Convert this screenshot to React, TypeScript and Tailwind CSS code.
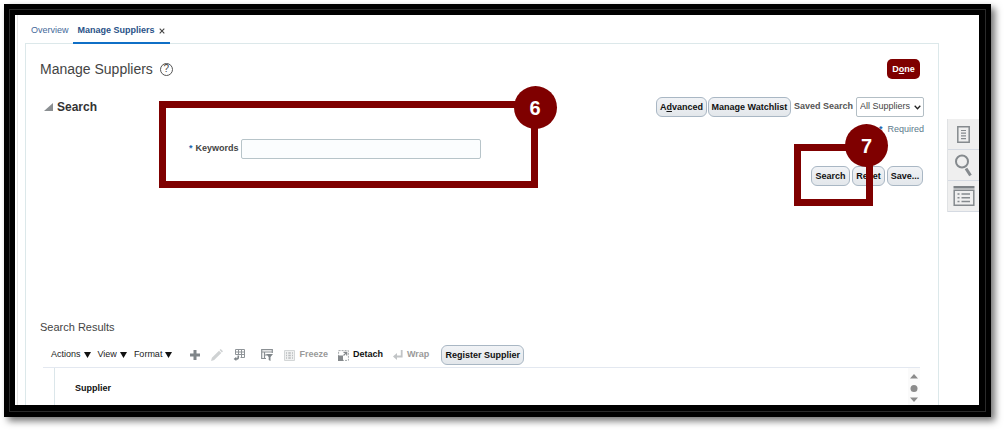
import type { ReactNode } from "react";

const menus = ["Actions", "View", "Format"];

const buttonLook =
    "h-5 shrink-0 rounded-md border border-[#a9b7c4] bg-linear-to-b from-[#f1f3f6] to-[#e3e7eb] text-[9px] font-bold leading-3 text-[#111] whitespace-nowrap";

// Numbered marker on the corner of a highlighted area
function Badge({ value, className }: { value: string; className: string }) {
    return (
        <span
            className={`absolute flex h-[43px] w-[43px] items-center justify-center rounded-full bg-[#7f0000] text-xl font-bold text-white ${className}`}
        >
            {value}
        </span>
    );
}

function IconButton({
    label,
    className,
    children,
}: {
    label: string;
    className: string;
    children: ReactNode;
}) {
    return (
        <button
            type="button"
            aria-label={label}
            className={`h-3 w-3 shrink-0 ${className}`}
        >
            <svg viewBox="0 0 12 12" className="h-3 w-3" aria-hidden="true">
                {children}
            </svg>
        </button>
    );
}

function Tabs() {
    return (
        <nav className="flex h-[29px] items-stretch pl-4 text-[9px]">
            <a
                href="#overview"
                className="flex items-center pt-[2px] text-[#44699a]"
            >
                Overview
            </a>
            <div className="relative z-10 ml-1 flex items-center gap-1 border-b-2 border-[#0f6fc6] px-[5px] pt-1">
                <a href="#suppliers" className="font-bold text-[#2a5288]">
                    Manage Suppliers
                </a>
                <button type="button" aria-label="Close tab">
                    <svg viewBox="0 0 6 6" className="h-[6px] w-[6px]">
                        <path
                            d="M.7 .7 5.3 5.3M5.3 .7 .7 5.3"
                            stroke="#444"
                            strokeWidth="1.1"
                        />
                    </svg>
                </button>
            </div>
        </nav>
    );
}

function SearchPanel() {
    return (
        <section>
            <div className="mt-[18px] flex h-5 items-center">
                <svg viewBox="0 0 9 8" className="ml-1 h-2 w-[9px]">
                    <path d="M9 0V8H0Z" fill="#8b8f92" />
                </svg>
                <h2 className="ml-1 text-xs font-bold text-[#333]">Search</h2>
                <button
                    type="button"
                    className={`${buttonLook} ml-auto w-[51px]`}
                >
                    A<u>d</u>vanced
                </button>
                <button
                    type="button"
                    className={`${buttonLook} ml-px w-[83px]`}
                >
                    Manage Watchlist
                </button>
                <label
                    htmlFor="saved"
                    className="ml-[3px] text-[9px] font-bold text-[#555]"
                >
                    Saved Search
                </label>
                <div className="relative ml-[3px] flex items-center">
                    <select
                        id="saved"
                        className="h-5 w-[68px] appearance-none rounded-xs border border-[#b3bec5] bg-white pl-[3px] text-[9px] text-[#444]"
                    >
                        <option>All Suppliers</option>
                    </select>
                    <svg
                        viewBox="0 0 7 5"
                        className="pointer-events-none absolute right-[3px] h-[5px] w-[7px]"
                    >
                        <path
                            d="M.7 .8 3.5 3.7 6.3 .8"
                            fill="none"
                            stroke="#222"
                            strokeWidth="1.3"
                        />
                    </svg>
                </div>
            </div>

            <p className="mt-[6px] flex justify-end gap-[5px] text-[9px] leading-3 text-[#5b7a8c]">
                <span className="font-bold text-[#1c66b0]">*</span> Required
            </p>

            <div className="relative ml-[149px] mt-1 flex h-5 w-fit items-center text-[9px]">
                <span className="font-bold text-[#1c66b0]">*</span>
                <label
                    htmlFor="keywords"
                    className="ml-[3px] w-[45px] font-bold text-[#444]"
                >
                    Keywords
                </label>
                <input
                    id="keywords"
                    type="text"
                    className="h-5 w-60 rounded-xs border border-[#b7c4c9] bg-[#fbfdfe] px-1"
                />
                <div className="pointer-events-none absolute -bottom-[29px] -left-[30px] -right-[57px] -top-[38px] border-[7px] border-[#7f0000]">
                    <Badge value="6" className="-right-[26px] -top-[22px]" />
                </div>
            </div>

            <div className="mt-[7px] flex justify-end">
                <div className="relative flex">
                    <button
                        type="button"
                        className={`${buttonLook} w-[39px]`}
                    >
                        Search
                    </button>
                    <div className="pointer-events-none absolute -bottom-5 -left-[17px] -right-[23px] -top-[22px] z-10 border-[7px] border-[#7f0000]">
                        <Badge
                            value="7"
                            className="-right-[22px] -top-[27px]"
                        />
                    </div>
                </div>
                <button
                    type="button"
                    className={`${buttonLook} ml-[2px] w-[33px]`}
                >
                    Reset
                </button>
                <button
                    type="button"
                    className={`${buttonLook} ml-[2px] mr-px w-9`}
                >
                    Save...
                </button>
            </div>
        </section>
    );
}

function Toolbar() {
    return (
        <div className="mt-[10px] flex h-5 items-center pl-[11px] text-[9px]">
            <div className="flex gap-[7px]">
                {menus.map((menu) => (
                    <button
                        key={menu}
                        type="button"
                        className="flex items-center gap-[3px] text-[#222]"
                    >
                        {menu}
                        <svg viewBox="0 0 7 6" className="h-[6px] w-[7px]">
                            <path d="M0 0H7L3.5 6Z" fill="#111" />
                        </svg>
                    </button>
                ))}
            </div>
            <IconButton label="Add" className="ml-[17px]">
                <path d="M6 1V11M1 6H11" stroke="#7f8589" strokeWidth="3" />
            </IconButton>
            <IconButton label="Edit" className="ml-[10px]">
                <path
                    d="M0 12 .9 8.800 8 1.700 10.300 4 3.200 11.100ZM8.600 1.100 9.700 0 12 2.300 10.900 3.400Z"
                    fill="#cfd2d3"
                />
            </IconButton>
            <IconButton label="Export to Excel" className="ml-[10px]">
                <path
                    d="M2.5 5.500V.5H11.5V8.5H7.500M2.5 3H11.5M5.5 .5V5.500M8.5 .5V8.5M2.500 5.500H11.5"
                    fill="none"
                    stroke="#8f9498"
                />
                <path
                    d="M5.300 6.5V8.200Q5.300 10 3 10"
                    fill="none"
                    stroke="#7f8589"
                    strokeWidth="1.6"
                />
                <path d="M3.300 7.800V12L.6 10Z" fill="#7f8589" />
            </IconButton>
            <IconButton label="Query by Example" className="ml-4">
                <path
                    d="M11.3 4V.7H.7V9.5H5M.7 3H11M3.5 3V9.5M3.5 6H6"
                    fill="none"
                    stroke="#8a8f93"
                    strokeWidth="1.2"
                />
                <path d="M5 5H12L9.5 8V12L7.7 11V8Z" fill="#7f8589" />
            </IconButton>
            <button
                type="button"
                disabled
                className="ml-[11px] flex items-center gap-1 font-bold text-[#9a9a9a]"
            >
                <svg viewBox="0 0 11 11" className="h-[11px] w-[11px]">
                    <path
                        d="M.5 .5H10.5V10.5H.5Z"
                        fill="#f0f1f1"
                        stroke="#d3d6d7"
                    />
                    <path
                        d="M2 3H3M2 5.5H3M2 8H3M4.3 3H6.8M4.3 5.5H6.8M4.3 8H6.8M8 3H9M8 5.5H9M8 8H9"
                        stroke="#b9bdbf"
                        strokeWidth="1.5"
                    />
                </svg>
                Freeze
            </button>
            <button
                type="button"
                className="ml-[10px] flex items-center gap-1 font-bold text-[#111]"
            >
                <svg viewBox="0 0 11 11" className="h-[11px] w-[11px]">
                    <path
                        d="M.6 .6H10.4V10.4H.6Z"
                        fill="none"
                        stroke="#a4a8ab"
                        strokeDasharray="2 1"
                    />
                    <path d="M0 5.500H5V11H0Z" fill="#85898c" />
                    <path
                        d="M5.500 5.500 8.2 2.800M5.5 2.3H8.7V5.5"
                        fill="none"
                        stroke="#85898c"
                        strokeWidth="1.2"
                    />
                </svg>
                Detach
            </button>
            <button
                type="button"
                disabled
                className="ml-[10px] flex items-center gap-1 font-bold text-[#9a9a9a]"
            >
                <svg viewBox="0 0 10 10" className="h-[10px] w-[10px]">
                    <path
                        d="M8.7 0V6.5H3"
                        fill="none"
                        stroke="#c1c4c6"
                        strokeWidth="1.8"
                    />
                    <path d="M0 6.5 4 3V10Z" fill="#c1c4c6" />
                </svg>
                Wrap
            </button>
            <button type="button" className={`${buttonLook} ml-3 w-[83px]`}>
                Register Supplier
            </button>
        </div>
    );
}

function Results() {
    return (
        <section className="mt-[133px] flex flex-1 flex-col">
            <h2 className="text-[11px] leading-4 text-[#444]">
                Search Results
            </h2>
            <Toolbar />
            <div className="ml-[3px] mr-[4px] mt-[2px] flex flex-1 border-t border-[#e3e8f0]">
                <div className="ml-[11px] flex-1 border-l border-[#dbe6ea]">
                    <table className="w-full text-left text-[9px]">
                        <thead>
                            <tr>
                                <th className="h-[37px] pl-5 pt-1 text-[#111]">
                                    Supplier
                                </th>
                            </tr>
                        </thead>
                    </table>
                </div>
                <svg
                    viewBox="0 0 12 37"
                    className="h-[37px] w-3 bg-[#fafafa]"
                    aria-hidden="true"
                >
                    <path d="M6 6 10 10.5H2ZM2 29.500H10L6 34Z" fill="#8a8a8a" />
                    <circle cx="6" cy="20.500" r="3.500" fill="#8a8a8a" />
                </svg>
            </div>
        </section>
    );
}

function Rail() {
    const item =
        "flex h-[31px] w-[31px] items-center justify-center border-b border-[#d5dae2] bg-[#efefef]";
    return (
        <aside className="ml-2 mt-[104px] h-fit border-l border-[#e0e2e4]">
            <button type="button" aria-label="Notes" className={item}>
                <svg viewBox="0 0 13 17" className="h-[17px] w-[13px]">
                    <path
                        d="M.8 .8H12.2V16.2H.8Z"
                        fill="none"
                        stroke="#858a8e"
                        strokeWidth="1.5"
                    />
                    <path
                        d="M4 4.500H9M4 7.200H9M4 9.900H9M4 12.600H9"
                        stroke="#858a8e"
                        strokeWidth="1.2"
                    />
                </svg>
            </button>
            <button type="button" aria-label="Find" className={item}>
                <svg viewBox="0 0 17 23" className="h-[23px] w-[17px]">
                    <circle
                        cx="7"
                        cy="7.500"
                        r="6"
                        fill="none"
                        stroke="#858a8e"
                        strokeWidth="2"
                    />
                    <path
                        d="M11 14.500 15.500 21.500"
                        stroke="#858a8e"
                        strokeWidth="3"
                    />
                </svg>
            </button>
            <button type="button" aria-label="List" className={item}>
                <svg viewBox="0 0 22 20" className="h-5 w-[22px]">
                    <path d="M.5 0H21.500V2.500H.5Z" fill="#7d8286" />
                    <path
                        d="M1.200 4.300H20.800V19.200H1.200Z"
                        fill="none"
                        stroke="#858a8e"
                        strokeWidth="1.5"
                    />
                    <path
                        d="M4.500 8H6.500M4.500 11.700H6.500M4.500 15.400H6.500M8.500 8H17M8.500 11.700H17M8.500 15.400H17"
                        stroke="#858a8e"
                        strokeWidth="1.5"
                    />
                </svg>
            </button>
        </aside>
    );
}

export default function App() {
    return (
        <div className="flex min-h-screen flex-col bg-white pb-[13px] pl-1 pr-[13px] pt-1 font-['Liberation_Sans',Arial,sans-serif]">
            <div className="flex flex-1 flex-col bg-black p-[5px] shadow-[4px_4px_7px_rgba(0,0,0,0.55)]">
                <div className="flex flex-1 flex-col border border-[#2a2a2a] pb-[6px] pl-[5px] pr-[6px] pt-[5px]">
                    <div className="flex flex-1 bg-white">
                        <div className="w-[3px] rounded-bl-md border-r border-[#e4e4e4]" />
                        <main className="-ml-[3px] flex flex-1 flex-col">
                            <Tabs />
                            <div className="-mt-px ml-[10px] flex flex-1 flex-col border border-b-0 border-[#dce8ea] pl-[14px] pr-[14px] pt-[15px]">
                                <header className="flex h-5 items-center">
                                    <h1 className="text-sm text-[#444]">
                                        Manage Suppliers
                                    </h1>
                                    <button
                                        type="button"
                                        aria-label="Help"
                                        className="ml-[7px] flex h-[13px] w-[13px] items-center justify-center rounded-full border border-[#555] text-[10px] leading-3 text-[#444]"
                                    >
                                        ?
                                    </button>
                                    <button
                                        type="button"
                                        className="ml-auto mr-1 h-5 w-[33px] rounded-[5px] bg-[#7f0000] text-[9px] font-bold leading-3 text-white"
                                    >
                                        D<u>o</u>ne
                                    </button>
                                </header>
                                <SearchPanel />
                                <Results />
                            </div>
                        </main>
                        <Rail />
                    </div>
                </div>
            </div>
        </div>
    );
}
